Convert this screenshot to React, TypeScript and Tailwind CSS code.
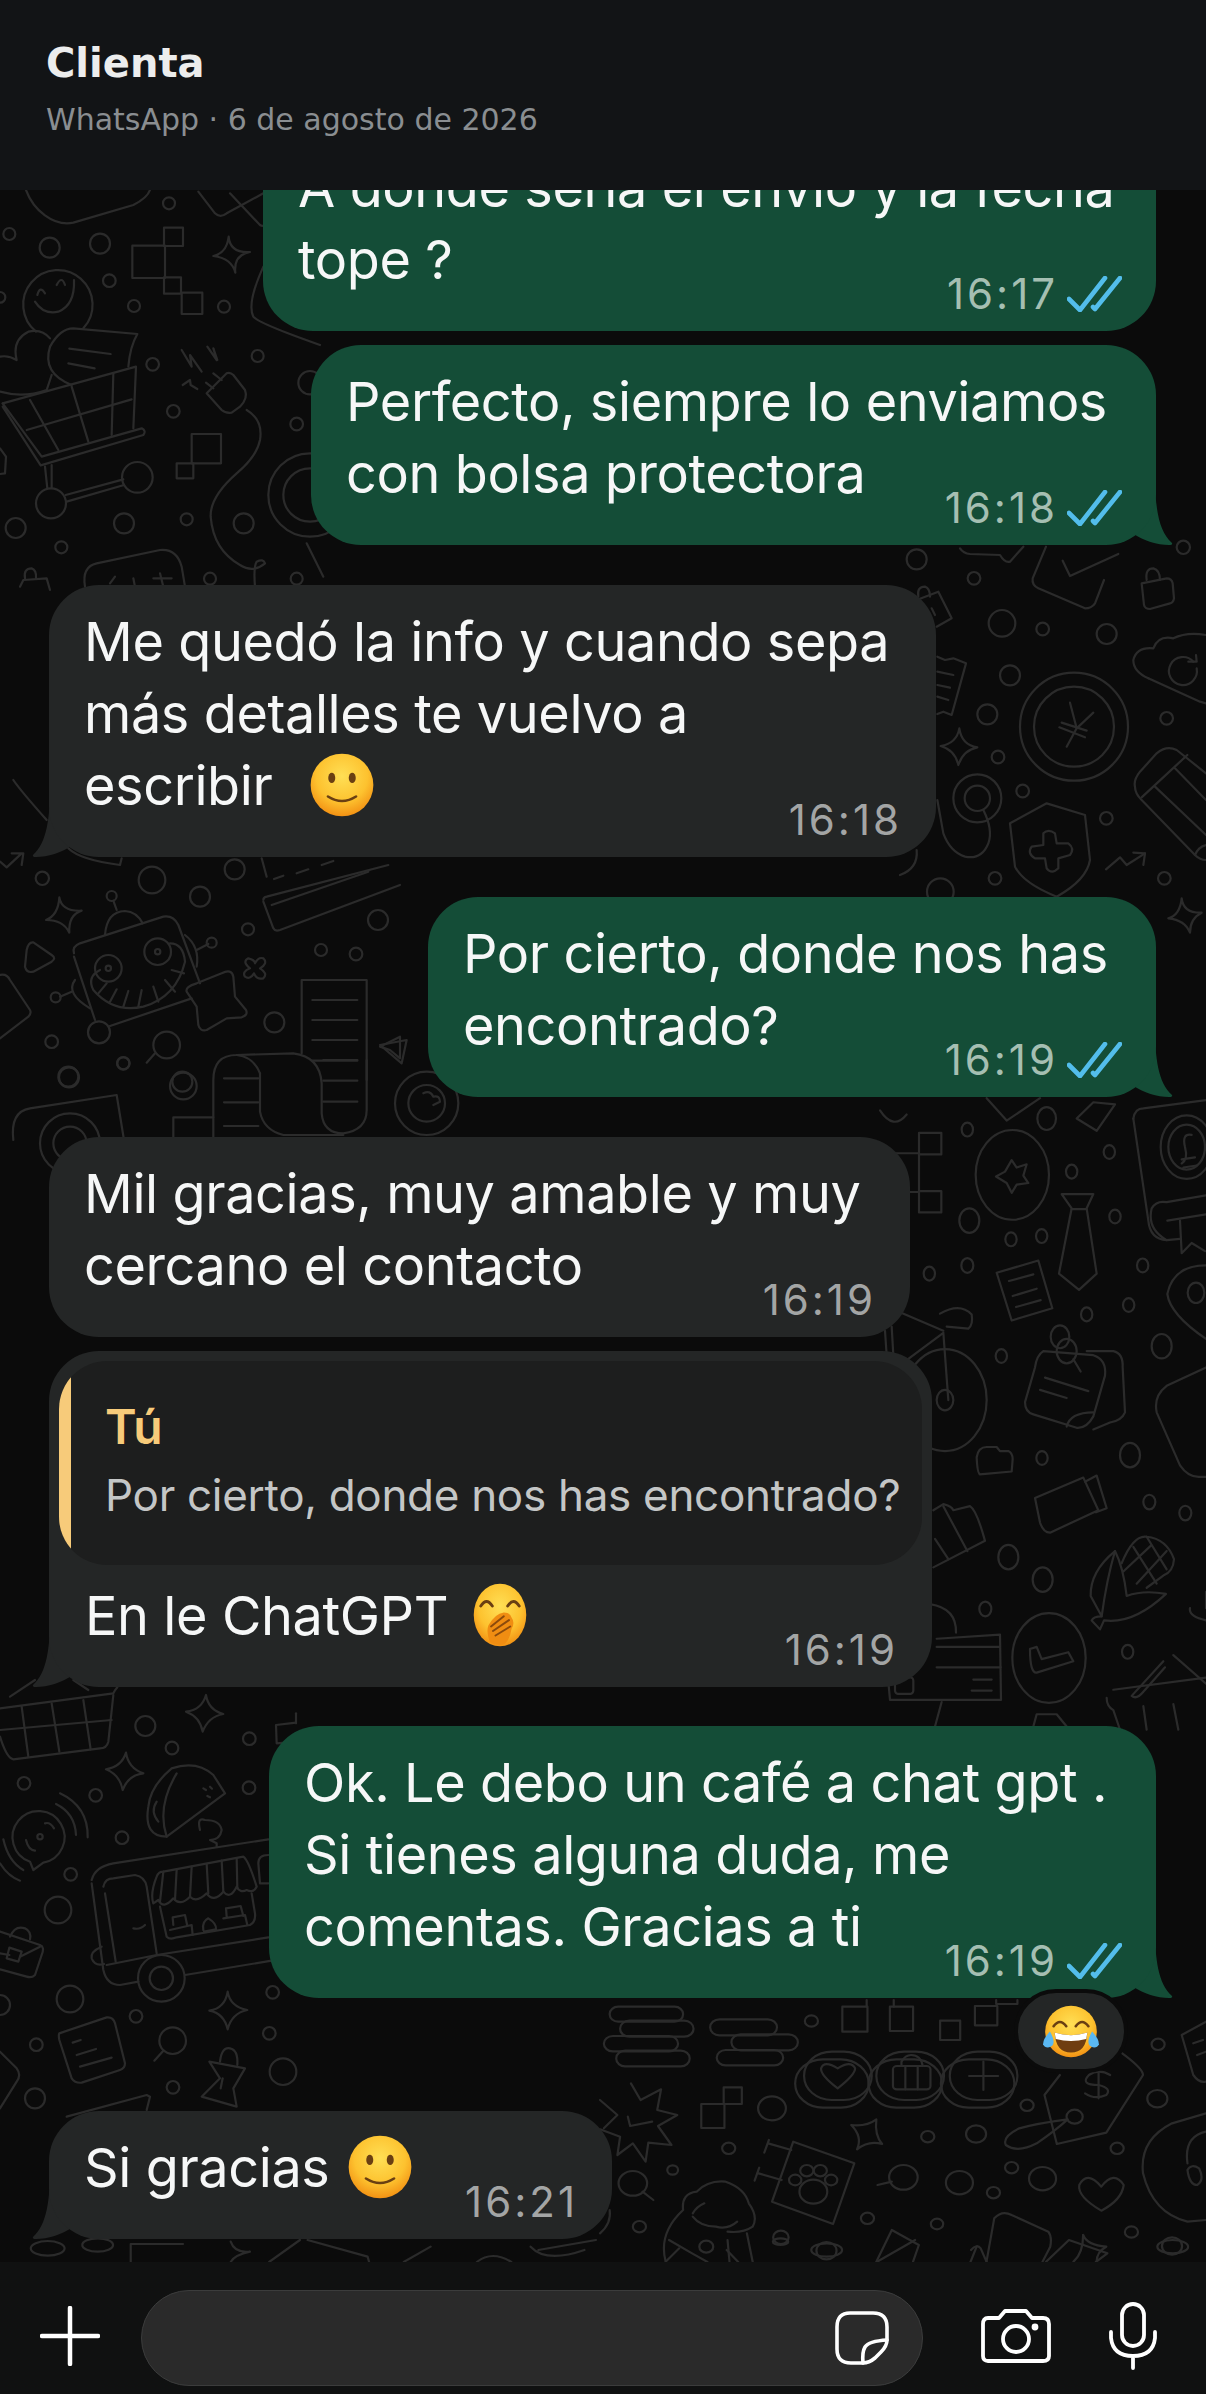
import React from 'react';

type Layer = {
  ox: number;
  oy: number;
  sx: number;
  sy: number;
  circles: number[][];
  rects?: number[][];
  paths: string[];
};

// wallpaper doodles, grouped by the region they sit in
const layers: Layer[] = [
  {
    ox: 0, oy: 190, sx: 1 / 3, sy: 1 / 3,
    circles: [[507,40,18],[28,132,18],[149,173,30],[300,161,30],[328,272,19],[402,348,18],[672,350,18],[458,523,19],[773,498,18],[520,664,19],[890,702,19],[47,1014,30],[372,1000,30],[560,988,18],[731,1000,30],[184,1072,18],[630,1166,18],[890,1166,18],[930,578,35],[153,940,45],[412,862,46],[930,915,125],[930,915,80],[0,322,16]],
    rects: [[492,113,57,55,0],[397,167,98,97,0],[492,262,51,49,0],[545,308,62,64,0],[575,732,88,88,0],[530,820,50,45,0]],
    paths: [
      'M78 0C100 60 160 110 220 98L400 45C430 30 445 15 450 0',
      'M595 5L645 70Q660 85 680 70L790 10','M690 10L780 105Q790 112 800 100',
      'M686 140Q690 190 750 186Q700 195 706 248Q695 205 640 198Q680 190 686 140Z',
      'M108 425A104 104 0 1 1 250 415','M105 335Q130 375 175 365Q225 345 222 270','M112 315Q120 285 135 310','M170 285Q185 255 195 285',
      'M0 500Q25 495 50 510Q35 450 85 425Q125 415 150 445','M0 605Q70 625 140 600L155 555',
      'M150 470Q180 415 220 415L412 432Q390 470 385 530','M150 470Q125 550 215 585','M208 476L332 492','M205 520L284 535',
      'M8 640L408 530L400 715','M8 650L122 826L430 735Q440 722 425 715L125 800L8 640','M90 630L175 780','M215 590L265 755','M340 550L335 735','M80 720L395 628',
      'M135 830L142 895','M155 825L155 893','M197 915L370 868','M200 935L372 885',
      'M620 610L680 550Q690 545 700 555L735 600Q745 625 720 650L695 668Q675 670 665 660Z','M640 550L665 570','M618 578L640 595',
      'M740 660Q790 690 780 750Q770 800 710 850Q630 920 632 980Q640 1080 720 1125Q760 1150 795 1120Q790 1105 770 1115Q760 1130 765 1190',
      'M545 480L575 530L570 495L605 545','M622 470L650 510L640 475L652 510','M548 585L570 570L572 585L592 597',
      'M790 230Q740 340 760 380Q775 400 960 465',
      'M255 1190Q245 1130 290 1120L480 1080Q530 1075 545 1130L555 1190','M330 1180L345 1160M400 1165L405 1190M480 1150L490 1190M460 1165L515 1165',
      'M60 1190L70 1170L140 1165L150 1200','M75 1165Q70 1135 95 1135Q110 1140 108 1165',
      'M0 775L18 800L15 850L0 852','M920 1060L970 1160',
    ],
  },
  {
    ox: 0, oy: 780, sx: 1 / 3, sy: 1 / 3,
    circles: [[127,295,20],[456,300,40],[600,350,30],[704,268,30],[1134,420,30],[744,448,18],[963,510,18],[1068,522,19],[823,727,30],[155,785,19],[370,850,19],[205,890,30],[547,905,30],[500,795,40],[335,348,15],[325,565,40],[473,515,40],[325,565,8],[473,515,8],[167,652,15],[635,488,15],[297,757,33]],
    paths: [
      'M40 0Q60 30 140 120','M205 205Q240 240 360 255L365 235',
      'M0 245L20 262L65 220M35 220L70 220L65 255',
      'M178 352Q185 395 245 392Q205 405 208 458Q190 420 138 420Q175 405 178 352Z',
      'M100 487Q85 485 80 510L75 560Q80 580 100 575L155 545Q170 535 155 525Z',
      'M222 520Q215 500 240 490L490 410Q520 405 535 435L600 610','M222 530L285 720','M330 738L575 655',
      'M315 465Q320 395 375 393Q410 395 428 430','M350 390L340 362',
      'M300 570Q260 590 280 630Q340 700 430 680Q530 650 555 545Q550 490 510 490',
      'M320 610L295 640M350 628L330 665M385 633L370 680M425 630L415 680M460 620L475 665M495 600L525 635M515 570L552 580',
      'M225 600Q195 640 270 685','M180 650L215 635','M555 465Q600 500 590 560','M590 510L625 492',
      'M590 610L665 580Q695 565 700 590L705 650L738 690Q745 705 725 712L680 715L620 750Q600 755 595 735L590 680L560 635Q555 620 590 610Z',
      'M745 535Q765 540 765 550Q775 530 790 535Q805 550 780 565Q805 580 790 595Q770 600 762 580Q750 600 735 590Q725 575 750 565Q725 545 745 535Z',
      'M790 360Q790 352 800 350L1165 255','M790 365L820 445Q825 455 840 450L1200 315','M815 375L1105 275',
      'M785 235L800 290M822 297L850 287M890 280L925 268M965 255L1000 243',
      'M905 820L905 600L1100 600L1100 900','M937 660H1072M937 720H1072M937 780H1072M937 842H1072',
      'M0 585Q20 580 30 600L90 690Q95 700 85 710L0 775','M465 820L440 848',
      'M1140 800L1200 770L1200 835L1170 810Z',
    ],
  },
  {
    ox: 0, oy: 1040, sx: 1 / 3, sy: 1 / 3,
    circles: [[207,112,30],[370,70,18],[550,138,40],[210,310,90],[210,310,50],[1280,190,95],[1280,190,55]],
    paths: [
      'M970 60H1072M970 122H1072M970 185H1072','M672 115H775M672 187H775M672 258H775',
      'M640 300L640 120Q640 45 710 45L880 40Q960 50 965 130L965 220Q970 280 1030 280Q1100 270 1100 210L1100 60',
      'M780 100Q760 50 710 45','M780 100L780 215Q790 270 850 285L1030 285',
      'M40 300Q30 215 90 205L350 165L372 300','M520 300L520 232L640 232',
      'M1140 15L1220 0L1205 70Z','M1270 160Q1290 150 1300 170Q1320 165 1320 185L1300 195',
    ],
  },
  {
    ox: 900, oy: 540, sx: 1 / 3, sy: 1 / 3,
    circles: [[50,58,30],[222,115,19],[306,250,40],[428,267,19],[620,282,30],[850,22,20],[330,406,30],[800,535,19],[262,523,30],[294,651,19],[368,753,19],[619,835,19],[285,1015,19],[793,1015,19],[121,1055,40],[522,560,162],[522,560,120],[232,775,72],[232,775,38]],
    paths: [
      'M438 20L398 115Q395 135 415 145L555 205Q575 205 585 190L612 120','M488 62L510 108L655 42',
      'M725 130L800 115Q815 115 818 130L822 175Q820 188 810 190L750 207Q735 207 732 195Z','M740 120Q735 85 760 85Q780 90 780 120',
      'M745 415Q700 395 700 360Q710 320 760 325Q775 285 820 295Q860 275 918 285','M745 415L900 485L918 490',
      'M880 365A42 42 0 1 0 890 385','M865 365L890 365L888 345',
      'M510 488L530 565L500 620','M580 518L530 565','M485 548L560 572','M478 562L555 592',
      'M705 740Q700 720 720 695L770 640Q800 615 830 630L918 700','M705 740Q705 760 725 780L885 945Q900 960 918 960','M725 772L862 645','M765 740L918 885','M825 685L918 780','M885 945Q895 920 918 915',
      'M112 350L135 360L160 355L198 370L155 525L130 515L112 522','M112 395L160 405','M112 435L150 443','M112 470L145 480',
      'M178 565Q185 615 232 622Q190 630 175 675Q165 630 122 618Q170 610 178 565Z',
      'M50 180L115 155L155 235L110 260','M55 170Q50 140 75 140Q90 145 90 170','M95 205L105 225',
      'M250 810Q280 870 265 910Q245 960 195 950Q150 935 130 880L112 780',
      'M330 850L440 790L555 825L570 960Q560 1020 470 1070Q370 1030 345 980Z',
      'M430 880Q445 865 465 880L470 910L505 910Q525 925 510 945L475 955L475 985Q455 1005 440 985L435 955L405 955Q380 940 395 920L430 915Z',
      'M618 988L660 952L680 975L735 940','M700 938L735 940L730 975',
      'M845 1075Q850 1120 905 1118Q870 1135 870 1178Q855 1140 805 1135Q840 1125 845 1075Z',
      'M180 25Q190 40 210 42L300 45Q315 70 330 65L370 20','M0 1005Q55 985 50 930',
    ],
  },
  {
    ox: 880, oy: 1090, sx: 1 / 3, sy: 0.408,
    circles: [[262,97,17],[500,70,28],[688,152,17],[575,200,17],[268,320,30],[705,310,17],[393,366,17],[485,358,17],[262,430,18],[148,450,17],[788,430,17],[746,527,17],[620,550,17],[845,628,30],[364,652,17],[486,902,17],[750,895,30],[808,1010,18],[916,1037,18],[385,1145,30],[488,1200,30],[316,1272,18],[743,1377,17],[920,140,78],[920,140,55],[948,497,25],[540,605,28],[560,640,30],[195,760,125],[195,760,25],[397,208,110],[507,1392,110]],
    rects: [[117,105,67,53,0],[117,248,67,52,0],[45,1440,55,40,8]],
    paths: [
      'M0 155H117','M90 250H117','M117 158V248',
      'M395 172L410 190L440 182L430 210L445 228L410 232L395 252L380 228L348 212L375 200Z',
      'M545 255L640 255L620 290L650 450L597 490L537 450L575 290Z','M575 292L620 292',
      'M350 448L475 418L517 535L395 565Z','M387 468L460 452','M398 505L470 487','M408 532L482 515',
      'M760 70Q765 45 790 45L978 25','M760 70L805 320Q810 365 860 368L900 365','M860 368Q800 340 815 290Q830 270 860 275L978 258','M862 320L978 305','M900 320L905 400L935 375L975 395',
      'M905 170L945 165M910 190L950 185M935 110Q905 105 915 140Q925 170 905 180',
      'M978 430Q880 430 862 500Q870 550 978 610','M978 680L860 725Q820 750 830 790L900 920Q925 950 960 948L978 948',
      'M490 640Q470 650 465 680L435 765Q435 790 460 795L590 828Q620 830 640 800L675 700Q680 660 640 650L490 640','M620 640L700 640Q730 645 728 680L735 790Q725 810 690 815L640 832','M495 705L625 738','M480 735L560 755','M580 660L602 690','M560 825Q570 790 640 790',
      'M60 545L190 590','M75 665L190 595L205 760','M180 548Q240 520 275 550Q280 575 265 585L200 580','M15 590L20 650M35 580L40 650',
      'M290 900Q295 875 320 875L350 875L360 885L385 885Q398 890 398 905L395 935L300 942Q292 940 290 900',
      'M465 1000L610 950L655 1030L510 1085Q490 1085 480 1060Z','M615 960L650 945L680 1025L648 1035',
      'M705 1130Q630 1180 632 1240L665 1290Q640 1290 635 1300L660 1322L672 1300Q760 1310 858 1235Q790 1225 740 1240Q730 1170 705 1130','M705 1130Q680 1200 665 1290',
      'M725 1160Q760 1090 800 1095Q860 1100 882 1150Q880 1180 850 1190L800 1220','M760 1120L830 1210M800 1095L860 1175M730 1180L815 1115M770 1210L860 1130',
      'M450 1370L470 1365L485 1395L565 1378L580 1400L470 1428Q450 1430 450 1370',
      'M170 1345L360 1335L363 1495L30 1495L25 1450','M170 1365L360 1365','M170 1415L362 1415','M280 1445L335 1445','M275 1472L335 1472','M150 1260Q230 1270 228 1330','M185 1500L165 1560',
      'M160 1030L190 1015Q215 1020 220 1030L270 1020Q290 1030 315 1105L160 1170','M190 1020L262 1130','M165 1100L205 1150',
      'M850 1400L755 1485Q770 1495 790 1475L855 1415','M880 1385L978 1455','M700 1470L978 1440','M680 1490Q680 1510 700 1520L720 1568','M790 1510L800 1568','M880 1505L895 1568',
      'M460 1560L470 1530L530 1530L560 1560','M930 1270Q925 1290 978 1300','M978 1230V1270','M0 50Q40 100 80 60','M320 20L380 75L480 20','M590 70L640 30L705 35L650 100Z',
    ],
  },
  {
    ox: 0, oy: 1680, sx: 1 / 3, sy: 1 / 3,
    circles: [[436,138,30],[516,204,19],[748,176,19],[72,310,19],[287,346,19],[747,323,19],[366,473,19],[212,583,19],[174,690,40],[210,957,40],[408,1009,19],[0,975,30],[818,937,19],[808,1060,19],[109,1094,19],[105,1255,30],[519,1222,19],[849,1175,40],[484,895,70],[484,895,35],[120,470,8],[518,1082,40]],
    paths: [
      'M0 85L340 40Q345 30 352 22','M340 45L325 185Q320 205 300 205L40 238Q20 235 0 170','M0 150L335 120','M65 80L85 230','M155 70L178 215','M250 60L272 208','M30 50L105 0','M220 0L265 30',
      'M378 218Q385 265 430 280Q385 285 368 330Q360 285 318 268Q365 260 378 218Z','M618 45Q625 90 670 102Q625 110 608 155Q600 110 558 95Q605 90 618 45Z','M683 935Q690 980 742 990Q695 1000 683 1048Q672 1000 628 992Q675 985 683 935Z',
      'M888 128L828 135L830 190L888 185','M888 100L888 130',
      'M515 265Q590 240 640 285L675 340L500 470Q430 470 445 380Q450 320 515 265','M500 470Q470 380 530 280','M470 365Q450 395 475 425','M610 325L618 330M630 320L636 326M622 348L630 352',
      'M600 450Q590 410 615 420Q660 420 665 450Q660 480 630 480L650 490L650 500',
      'M100 570L90 545A78 78 0 1 1 130 548Z','M162 445Q150 425 135 430','M78 480Q85 510 105 512','M168 372Q225 400 228 465','M180 340Q265 380 263 472','M10 478Q25 545 70 570','M0 550Q25 590 60 602',
      'M275 600Q285 560 340 550L805 478','M275 610L310 870Q320 915 360 915L415 905','M310 620Q315 595 340 595L405 585Q435 590 440 620L470 820','M315 640L347 845','M320 855L470 825L805 772','M555 885L815 842',
      'M490 575L730 530Q745 540 770 620Q760 640 740 630Q720 640 710 620Q690 660 670 635Q640 670 620 640Q590 670 570 650Q540 680 520 655Q490 690 475 660L460 670Q450 640 470 590Q475 575 490 575',
      'M490 575L480 665M530 568L525 660M575 560L570 650M620 552L625 640M665 542L670 635M710 535L712 625',
      'M480 680L500 770Q510 780 530 772L750 735Q768 725 765 700L755 640',
      'M510 750L575 735L578 765M520 735L518 712L555 705L562 738','M610 750Q605 725 625 715Q650 730 648 748L612 755','M670 715L735 705L742 735M680 710L678 685L722 678L730 708',
      'M400 745Q420 750 435 735','M305 800Q270 815 275 835Q285 860 312 852','M805 525Q775 525 775 550L780 610L805 610',
      'M0 755L120 795Q135 800 125 825L105 885Q95 895 80 890L0 868','M0 820L28 825','M60 830L120 800','M28 803L65 815L55 845L20 835Z','M30 770Q45 735 75 745Q95 755 90 778',
      'M178 1060L320 1012Q340 1010 345 1030L375 1150Q375 1165 360 1170L245 1208Q225 1210 215 1195L178 1080Q175 1065 178 1060Z','M218 1088L242 1080','M230 1125L288 1107','M240 1160L335 1133',
      'M490 1112L463 1142',
      'M628 1145L735 1165L700 1225L710 1280L605 1250L660 1195Z','M660 1145Q665 1100 690 1105Q715 1110 712 1155','M668 1195L662 1225',
      'M0 1115L50 1165Q65 1185 50 1205L0 1285','M200 1310L440 1245L450 1250L440 1290',
    ],
  },
  {
    ox: 600, oy: 2000, sx: 0.3865, sy: 1 / 3,
    circles: [[547,63,17],[333,445,17],[188,510,14],[102,680,17],[692,655,17],[872,672,16],[468,712,20],[586,752,26],[445,325,36],[848,410,17],[973,402,26],[1105,316,17],[1338,445,17],[1442,296,26],[1444,133,17],[1065,503,17],[1145,536,35],[930,548,35],[1018,578,17],[1375,696,17],[1480,738,26],[85,550,37],[785,532,37],[552,575,36],[505,540,16],[535,512,17],[570,512,17],[598,540,16],[1228,350,21],[275,740,18]],
    rects: [[25,20,190,45,22],[52,62,190,48,24],[10,108,192,46,23],[42,152,190,47,23],[285,58,173,48,24],[340,103,172,48,24],[302,150,172,46,23],[627,20,65,75,0],[750,20,60,73,0],[880,62,52,58,0],[970,18,58,58,0],[320,262,47,50,0],[262,312,60,72,0],[528,155,175,145,72],[505,178,190,145,72],[715,155,175,145,72],[695,178,190,145,72],[905,155,175,145,72],[882,178,190,145,72],[758,198,97,70,10]],
    paths: [
      'M690 0V20','M760 0V20','M1025 0V12H1080V0',
      'M615 265Q570 225 572 205Q580 180 615 205Q650 180 660 205Q660 225 615 265Z',
      'M780 198V185Q790 165 805 165Q830 165 835 198','M790 198V268','M822 198V268','M955 228H1030','M992 185V270',
      'M1190 225L1150 285L1182 432L1310 398L1405 225Q1405 205 1345 155',
      'M1290 215V295','M1320 225Q1290 205 1265 225Q1240 255 1290 255Q1325 265 1310 285Q1280 300 1255 280',
      'M1210 358Q1130 370 1085 385Q1040 410 1050 435Q1080 460 1130 430Q1180 390 1210 358',
      'M80 250L105 300L158 268L148 330L200 345L150 378L185 435L125 428L118 485L85 430L45 465L52 410L0 388','M0 300L45 345L10 385','M72 350L78 378L135 365',
      'M110 575L138 600','M500 425L658 490L603 672L445 605Z','M495 450L435 430','M470 540L410 520','M437 420L425 458','M412 503L400 542',
      'M715 358Q710 405 730 432Q695 420 665 448Q680 410 650 375Q690 380 715 358Z',
      'M170 785Q150 700 215 630Q210 580 250 575Q280 540 325 545Q375 565 385 610Q410 650 395 680Q370 700 330 695','M240 640Q250 620 270 610','M240 650Q260 680 300 680Q330 690 355 665','M205 745L170 785','M330 720L335 785','M380 700L395 785',
      'M755 545L718 555','M1297 632Q1235 590 1240 555Q1260 510 1297 560Q1330 510 1355 555Q1350 600 1297 632Z',
      'M715 785L755 690L825 735L810 785','M1000 785L1020 655Q1040 630 1065 645L1160 695Q1170 710 1165 740L1145 785','M960 750Q975 730 985 745L1000 785',
      'M1250 705Q1260 735 1310 740Q1285 755 1285 785','M1225 785Q1250 760 1250 705',
      'M1568 65L1505 105L1535 225Q1550 250 1568 245','M1535 130L1560 120M1545 165L1568 155',
      'M1568 340L1480 370Q1395 420 1405 520Q1430 640 1520 665L1568 660','M1568 395Q1510 410 1520 490','M1520 510Q1530 490 1550 505Q1565 540 1545 555Q1525 555 1520 510',
      'M0 700Q30 670 25 630',
    ],
  },
  {
    ox: 0, oy: 2240, sx: 0.769, sy: 1 / 3,
    circles: [[62,25,22],[127,15,20],[1075,30,20],[1525,20,20],[1015,5,10]],
    paths: [
      'M170 66V12H238','M300 5Q305 40 325 35Q305 45 300 66','M350 66L390 0','M400 0L478 50L480 66','M525 66L560 20','M620 66Q640 30 665 66','M700 30L775 0','M690 20Q710 70 760 30','M870 0L900 40L920 66','M945 30L960 66','M1140 66L1190 0','M1270 20L1262 66','M1360 66L1390 0L1440 40L1425 66',
    ],
  },
];

const Wallpaper = () => (
  <svg
    className="absolute inset-0 h-full w-full [&_*]:[vector-effect:non-scaling-stroke]"
    viewBox="0 190 1206 2072"
    fill="none"
    stroke="#2b2b2b"
    strokeWidth={2.2}
    strokeLinecap="round"
    strokeLinejoin="round"
  >
    {layers.map((l, i) => (
      <g key={i} transform={`translate(${l.ox} ${l.oy}) scale(${l.sx} ${l.sy})`}>
        {l.circles.map(([x, y, r], j) => (
          <circle key={j} cx={x} cy={y} r={r} />
        ))}
        {(l.rects || []).map(([x, y, w, h, r], j) => (
          <rect key={j} x={x} y={y} width={w} height={h} rx={r} />
        ))}
        {l.paths.map((d, j) => (
          <path key={j} d={d} />
        ))}
      </g>
    ))}
  </svg>
);

const FaceDefs = ({ id }: { id: string }) => (
  <defs>
    <radialGradient id={id} cx="0.5" cy="0.36" r="0.68">
      <stop offset="0" stopColor="#ffdf55" />
      <stop offset="0.6" stopColor="#fdc22f" />
      <stop offset="1" stopColor="#f1890f" />
    </radialGradient>
  </defs>
);

const SmileEmoji = ({ className }: { className: string }) => (
  <svg viewBox="0 0 100 100" className={className}>
    <FaceDefs id="smile-face" />
    <circle cx="50" cy="50" r="49" fill="url(#smile-face)" />
    <ellipse cx="34" cy="39" rx="5.500" ry="8" fill="#6a3f12" />
    <ellipse cx="66" cy="39" rx="5.500" ry="8" fill="#6a3f12" />
    <path d="M28 68Q50 82 72 68" fill="none" stroke="#6a3f12" strokeWidth="4" strokeLinecap="round" />
  </svg>
);

const HandEmoji = ({ className }: { className: string }) => (
  <svg viewBox="0 0 84 100" className={className}>
    <FaceDefs id="hand-face" />
    <ellipse cx="42" cy="50" rx="41" ry="49" fill="url(#hand-face)" />
    <path d="M12 36Q21 22 30 36M54 36Q63 22 72 36" fill="none" stroke="#6a3f12" strokeWidth="4.500" strokeLinecap="round" />
    <path d="M26 92Q20 76 24 66Q34 48 48 46Q58 46 60 54Q66 62 60 72Q58 86 50 95Q38 100 26 92Z" fill="#f08d12" />
    <path d="M28 68L48 52M31 75L56 58M35 82L58 68" fill="none" stroke="#8a4a0c" strokeWidth="3" strokeLinecap="round" />
  </svg>
);

const JoyEmoji = ({ className }: { className: string }) => (
  <svg viewBox="0 0 110 100" className={className}>
    <FaceDefs id="joy-face" />
    <circle cx="55" cy="50" r="49" fill="url(#joy-face)" />
    <path d="M22 40Q34 24 46 40M64 40Q76 24 88 40" fill="none" stroke="#6a3f12" strokeWidth="5" strokeLinecap="round" />
    <path d="M24 52Q55 62 86 52Q84 90 55 90Q26 90 24 52Z" fill="#6f3d10" />
    <path d="M24 52Q55 62 86 52L84 64Q55 72 26 64Z" fill="#fff" />
    <path d="M15 50Q22 62 22 70A10.500 10.500 0 0 1 2 74Q2 64 15 50Z" fill="#5ab8f2" />
    <path d="M95 50Q88 62 88 70A10.500 10.500 0 0 0 108 74Q108 64 95 50Z" fill="#5ab8f2" />
  </svg>
);

const Ticks = () => (
  <svg viewBox="0 0 55 36" className="h-9 w-[55px]" fill="none" stroke="#53bdeb" strokeWidth={4.6} strokeLinecap="round" strokeLinejoin="round">
    <path d="M2 23L13 34L38 2" />
    <path d="M26 31L28 33L53 2" />
  </svg>
);

const Tail = ({ out }: { out: boolean }) => (
  <svg
    viewBox="0 0 51 70"
    className={out ? 'absolute bottom-0 right-[-17px] h-[70px] w-[51px]' : 'absolute bottom-0 left-[-17px] h-[70px] w-[51px] -scale-x-100'}
    fill={out ? '#144d37' : '#242626'}
  >
    <path d="M33 0C33 30 36 56 50 68Q51 70 47 70C35 70 22 66 10 58L0 40L0 0Z" />
  </svg>
);

type Msg = {
  out: boolean;
  width: string;
  time: string;
  tail?: boolean;
  mb: string;
  lines: React.ReactNode[];
  quote?: boolean;
  reaction?: boolean;
};

const messages: Msg[] = [
  { out: true, width: 'w-[893px]', time: '16:17', mb: 'mb-[14px]', lines: ['A donde sería el envío y la fecha', 'tope ?'] },
  { out: true, width: 'w-[845px]', time: '16:18', tail: true, mb: 'mb-[40px]', lines: ['Perfecto, siempre lo enviamos', 'con bolsa protectora'] },
  {
    out: false, width: 'w-[887px]', time: '16:18', tail: true, mb: 'mb-[40px]',
    lines: ['Me quedó la info y cuando sepa', 'más detalles te vuelvo a', <>escribir <SmileEmoji className="ml-[23px] inline-block h-[64px] w-[64px] align-[-12px]" /></>],
  },
  { out: true, width: 'w-[728px]', time: '16:19', tail: true, mb: 'mb-[40px]', lines: ['Por cierto, donde nos has', 'encontrado?'] },
  { out: false, width: 'w-[861px]', time: '16:19', mb: 'mb-[14px]', lines: ['Mil gracias, muy amable y muy', 'cercano el contacto'] },
  {
    out: false, width: 'w-[883px]', time: '16:19', tail: true, mb: 'mb-[39px]', quote: true,
    lines: [<>En le ChatGPT <HandEmoji className="ml-[7px] inline-block h-[64px] w-[60px] align-[-12px]" /></>],
  },
  { out: true, width: 'w-[887px]', time: '16:19', tail: true, reaction: true, mb: 'mb-[113px]', lines: ['Ok. Le debo un café a chat gpt .', 'Si tienes alguna duda, me', 'comentas. Gracias a ti'] },
  {
    out: false, width: 'w-[563px]', time: '16:21', tail: true, mb: 'mb-[23px]',
    lines: [<>Si gracias <SmileEmoji className="ml-1 inline-block h-[64px] w-[64px] align-[-12px]" /></>],
  },
];

const Bubble = ({ m }: { m: Msg }) => (
  <div className={`relative shrink-0 ${m.width} ${m.mb} ${m.out ? 'self-end' : 'self-start'}`}>
    {m.tail && <Tail out={m.out} />}
    <div className={`relative rounded-[50px] ${m.out ? 'bg-[#144d37]' : 'bg-[#242626]'} ${m.quote ? 'p-[10px] pb-0' : ''}`}>
      {m.quote && (
        <div className="flex h-[204px] overflow-hidden rounded-[48px] bg-[#1d1e1e]">
          <div className="w-[12px] shrink-0 bg-[#f7cb7a]" />
          <div className="pl-[34px] pt-[36px]">
            <div className="text-[48px] font-semibold leading-[60px] text-[#f7cb7a]">Tú</div>
            <div className="mt-[8px] whitespace-nowrap text-[44px] leading-[60px] tracking-[-0.3px] text-[#c4c6c6]">Por cierto, donde nos has encontrado?</div>
          </div>
        </div>
      )}
      <div className={`text-[54px] leading-[72px] tracking-[-0.4px] text-[#f6f7f7] ${m.quote ? 'pb-[35px] pl-[26px] pt-[15px]' : 'pb-[35px] pl-[35px] pt-[21px]'}`}>
        {m.lines.map((line, i) => (
          <div key={i} className="whitespace-nowrap">{line}</div>
        ))}
      </div>
      <div className="absolute bottom-[12px] right-[34px] flex items-center gap-[9px]">
        <span className={`text-[42px] leading-[50px] tracking-[3px] ${m.out ? 'text-[#a5bfb2]' : 'text-[#a3a5a5]'}`}>{m.time}</span>
        {m.out && <Ticks />}
      </div>
    </div>
    {m.reaction && (
      <div className="absolute bottom-[-75px] right-[28px] flex h-[84px] w-[114px] items-center justify-center rounded-[42px] border-[4px] border-[#0b0b0b] bg-[#242626]">
        <JoyEmoji className="h-[53px] w-[58px]" />
      </div>
    )}
  </div>
);

const App: React.FC = () => {
  return (
    <div className="flex h-[2394px] w-[1206px] flex-col overflow-hidden bg-[#0b0b0b] [font-family:Inter,sans-serif]">
      <header className="z-10 h-[190px] shrink-0 bg-[#121416] pl-[46px] pt-[38px] [font-family:'DejaVu_Sans',sans-serif]">
        <div className="text-[40px] font-bold leading-[50px] text-[#eceded]">Clienta</div>
        <div className="mt-[12px] text-[30px] leading-[40px] text-[#8a8e91]">WhatsApp · 6 de agosto de 2026</div>
      </header>

      <main className="relative flex min-h-0 flex-1 flex-col justify-end overflow-hidden pl-[49px] pr-[50px]">
        <Wallpaper />
        {messages.map((m, i) => (
          <Bubble key={i} m={m} />
        ))}
      </main>

      <footer className="flex h-[132px] shrink-0 items-center bg-[#101111] pl-[40px] pt-[16px]">
        <svg viewBox="0 0 60 60" className="h-[60px] w-[60px] shrink-0" fill="none" stroke="#fff" strokeWidth={4.5} strokeLinecap="round">
          <path d="M30 2V58M2 30H58" />
        </svg>
        <div className="ml-[41px] mt-[4px] flex h-[96px] w-[782px] items-center justify-end rounded-[48px] border border-[#3b3c3c] bg-[#2a2a2a] pr-[33px]">
          <svg viewBox="0 0 54 54" className="h-[54px] w-[54px]" fill="none" stroke="#fff" strokeWidth={3.6} strokeLinecap="round" strokeLinejoin="round">
            <path d="M15 2H38Q52 2 52 16V29Q52 35 46 41L40 47Q34 52 28 52H16Q2 52 2 38V16Q2 2 15 2Z" />
            <path d="M28 52Q27 41 30 36Q34 30 52 29" />
          </svg>
        </div>
        <svg viewBox="0 0 70 54" className="ml-[58px] h-[54px] w-[70px]" fill="none" stroke="#fff" strokeWidth={3.8} strokeLinecap="round" strokeLinejoin="round">
          <path d="M7 9H18L24 2H45L51 9H62Q68 9 68 15V47Q68 52 62 52H7Q2 52 2 47V15Q2 9 7 9Z" />
          <circle cx="35" cy="30" r="13" />
          <circle cx="54" cy="18" r="1.500" fill="#fff" />
        </svg>
        <svg viewBox="0 0 48 68" className="ml-[58px] h-[68px] w-[48px]" fill="none" stroke="#fff" strokeWidth={3.8} strokeLinecap="round" strokeLinejoin="round">
          <rect x="13" y="2" width="22" height="42" rx="11" />
          <path d="M2 30V36Q4 54 24 54Q44 54 46 36V30M24 54V66" />
        </svg>
      </footer>
    </div>
  );
};

export default App;
